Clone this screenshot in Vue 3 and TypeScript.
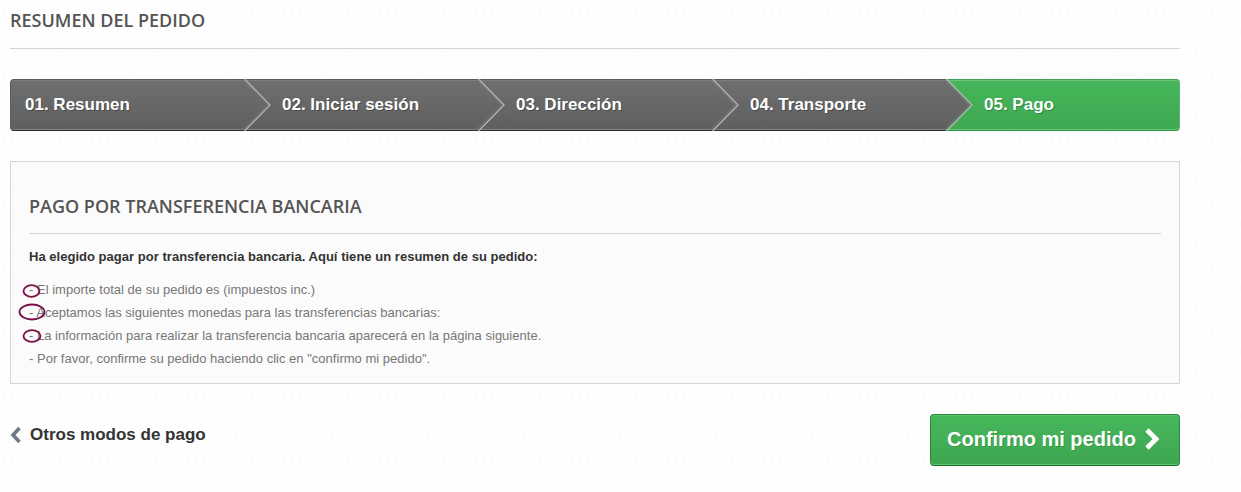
<script setup lang="ts">
const steps: string[] = ['01. Resumen', '02. Iniciar sesión', '03. Dirección', '04. Transporte', '05. Pago']
const lines: string[] = [
  '- El importe total de su pedido es (impuestos inc.)',
  '- Aceptamos las siguientes monedas para las transferencias bancarias:',
  '- La información para realizar la transferencia bancaria aparecerá en la página siguiente.',
  '- Por favor, confirme su pedido haciendo clic en "confirmo mi pedido".',
]
</script>

<template>
  <main class="page">
    <h1 class="page-title">RESUMEN DEL PEDIDO</h1>

    <ol class="steps">
      <li
        v-for="(step, i) in steps"
        :key="step"
        class="step"
        :class="{ current: i === steps.length - 1, first: i === 0 }"
      >
        <span>{{ step }}</span>
        <svg v-if="i > 0" class="chevron" width="28" height="52" viewBox="0 0 28 52" aria-hidden="true">
          <defs>
            <linearGradient :id="`tip-${i}`" x1="0" y1="0" x2="0" y2="1">
              <stop offset="0" stop-color="#6f6f6f" />
              <stop offset="1" stop-color="#5f5f5f" />
            </linearGradient>
          </defs>
          <path d="M0 1 L25 26 L0 51 Z" :fill="`url(#tip-${i})`" />
          <path d="M0.5 0 L26 26 L0.5 52" fill="none" stroke="#b4b4b4" stroke-width="1.3" />
          <path d="M-1.5 1 L23.5 26 L-1.5 51" fill="none" stroke="#7a7a7a" stroke-width="1" />
        </svg>
      </li>
    </ol>

    <section class="box">
      <h2 class="box-title">PAGO POR TRANSFERENCIA BANCARIA</h2>
      <p class="lead">Ha elegido pagar por transferencia bancaria. Aquí tiene un resumen de su pedido:</p>
      <ul class="lines">
        <li v-for="line in lines" :key="line">{{ line }}</li>
      </ul>
      <svg class="marks" width="30" height="62" viewBox="0 0 30 62" aria-hidden="true">
        <ellipse cx="13.5" cy="8" rx="8" ry="5.8" />
        <ellipse cx="14" cy="29" rx="12.5" ry="7.5" />
        <ellipse cx="14" cy="53" rx="8.5" ry="5.8" />
      </svg>
    </section>

    <nav class="actions">
      <a class="back" href="#">
        <svg width="11" height="18" viewBox="0 0 11 18" aria-hidden="true">
          <path d="M9.5 2 L3 9 L9.5 16" fill="none" stroke="#6f7b88" stroke-width="3.6" />
        </svg>
        <span>Otros modos de pago</span>
      </a>
      <a class="confirm" href="#">
        <span>Confirmo mi pedido</span>
        <svg width="17" height="24" viewBox="0 0 17 24" aria-hidden="true">
          <path d="M3 3 L12 12 L3 21" fill="none" stroke="#fff" stroke-width="4.8" />
        </svg>
      </a>
    </nav>
  </main>
</template>

<style>
html, body {
  margin: 0;
  height: 100%;
  overflow: hidden;
  background-color: #fefefe;
  background-image: url("data:image/svg+xml,%3Csvg xmlns='http://www.w3.org/2000/svg' width='96' height='64'%3E%3Cpath d='M4 2v16h8V6h6v12M24 2h16v8h-8v8M48 4h12v14M66 2v10h10V2M84 6h8v12h-6M2 26h14v10H8M22 24v14h10V28h8M46 26h6v12h10V24M70 28h18v8H76M6 44v14h8V48h8v10M30 46h14v12H34M54 44v8h12v-8M54 56h20M82 44v14h8V46' fill='none' stroke='%23000' stroke-opacity='0.012'/%3E%3C/svg%3E");
}
</style>

<style scoped>
.page {
  box-sizing: border-box;
  width: 1180px;
  padding-left: 10px;
  font-family: "Liberation Sans", Arial, sans-serif;
  font-size: 13px;
  color: #777;
}
.page-title {
  margin: 0 0 30px;
  height: 48px;
  border-bottom: 1px solid #d6d4d4;
  font-family: "Open Sans", sans-serif;
  font-size: 18px;
  font-weight: 600;
  line-height: 41px;
  color: #555454;
}
.steps {
  display: flex;
  height: 52px;
  margin: 0 0 30px;
  padding: 0;
  list-style: none;
}
.step {
  position: relative;
  flex: 0 0 234px;
  box-sizing: border-box;
  height: 52px;
  padding-left: 38px;
  border-top: 1px solid #5c5c5c;
  border-bottom: 1px solid #2c2c2c;
  background: linear-gradient(#6f6f6f, #5f5f5f);
  box-shadow: inset 0 1px 0 #7c7c7c, inset 0 -1px 0 #858585;
  font-size: 17px;
  font-weight: 700;
  line-height: 49px;
  color: #fff;
  text-shadow: 1px 1px 0 rgba(0, 0, 0, 0.3);
}
.step.first {
  padding-left: 14px;
  border-radius: 4px 0 0 4px;
  border-left: 1px solid #5c5c5c;
}
.step.current {
  border-top-color: #3aa04f;
  border-bottom-color: #2b9a3e;
  border-right: 1px solid #58b268;
  border-radius: 0 4px 4px 0;
  background: linear-gradient(#46b65a, #3fa851);
  box-shadow: inset 0 1px 0 #6cc47c, inset 0 -1px 0 #6cc47c;
  text-shadow: 1px 1px 0 rgba(0, 60, 10, 0.35);
}
.step span {
  position: relative;
  z-index: 2;
}
.chevron {
  position: absolute;
  left: 0;
  top: -1px;
  overflow: visible;
  z-index: 1;
}
.box {
  position: relative;
  box-sizing: border-box;
  height: 223px;
  padding: 30px 18px 0;
  border: 1px solid #d6d4d4;
  background: #fbfbfb;
}
.box-title {
  margin: 0 0 14px;
  padding-bottom: 12px;
  border-bottom: 1px solid #d6d4d4;
  font-family: "Open Sans", sans-serif;
  font-size: 18px;
  font-weight: 600;
  line-height: 29px;
  color: #555454;
}
.lead {
  margin: 0 0 12px;
  font-weight: 700;
  line-height: 18px;
  letter-spacing: 0.025px;
  color: #333;
}
.lines {
  margin: 0;
  padding: 0;
  list-style: none;
  line-height: 23px;
  letter-spacing: 0.015px;
}
.marks {
  position: absolute;
  left: 7px;
  top: 121px;
  overflow: visible;
}
.marks ellipse {
  fill: none;
  stroke: #7b0f47;
  stroke-width: 1.8;
}
.actions {
  display: flex;
  align-items: flex-start;
  justify-content: space-between;
  margin-top: 30px;
}
.back {
  display: flex;
  align-items: center;
  gap: 9px;
  margin-top: 9px;
  font-size: 17px;
  font-weight: 700;
  line-height: 24px;
  color: #333;
  text-decoration: none;
}
.confirm {
  display: flex;
  align-items: center;
  gap: 8px;
  box-sizing: border-box;
  width: 250px;
  height: 52px;
  padding: 0 0 2px 16px;
  border: 1px solid #2a8a3c;
  border-bottom-color: #1f6e2c;
  border-radius: 4px;
  background: linear-gradient(#47b75c, #3ea64f);
  box-shadow: inset 0 1px 0 #59c06c, inset 0 -1px 0 #62c573;
  font-size: 20px;
  font-weight: 700;
  color: #fff;
  text-decoration: none;
  text-shadow: 1px 1px 0 rgba(0, 60, 10, 0.2);
}
</style>
